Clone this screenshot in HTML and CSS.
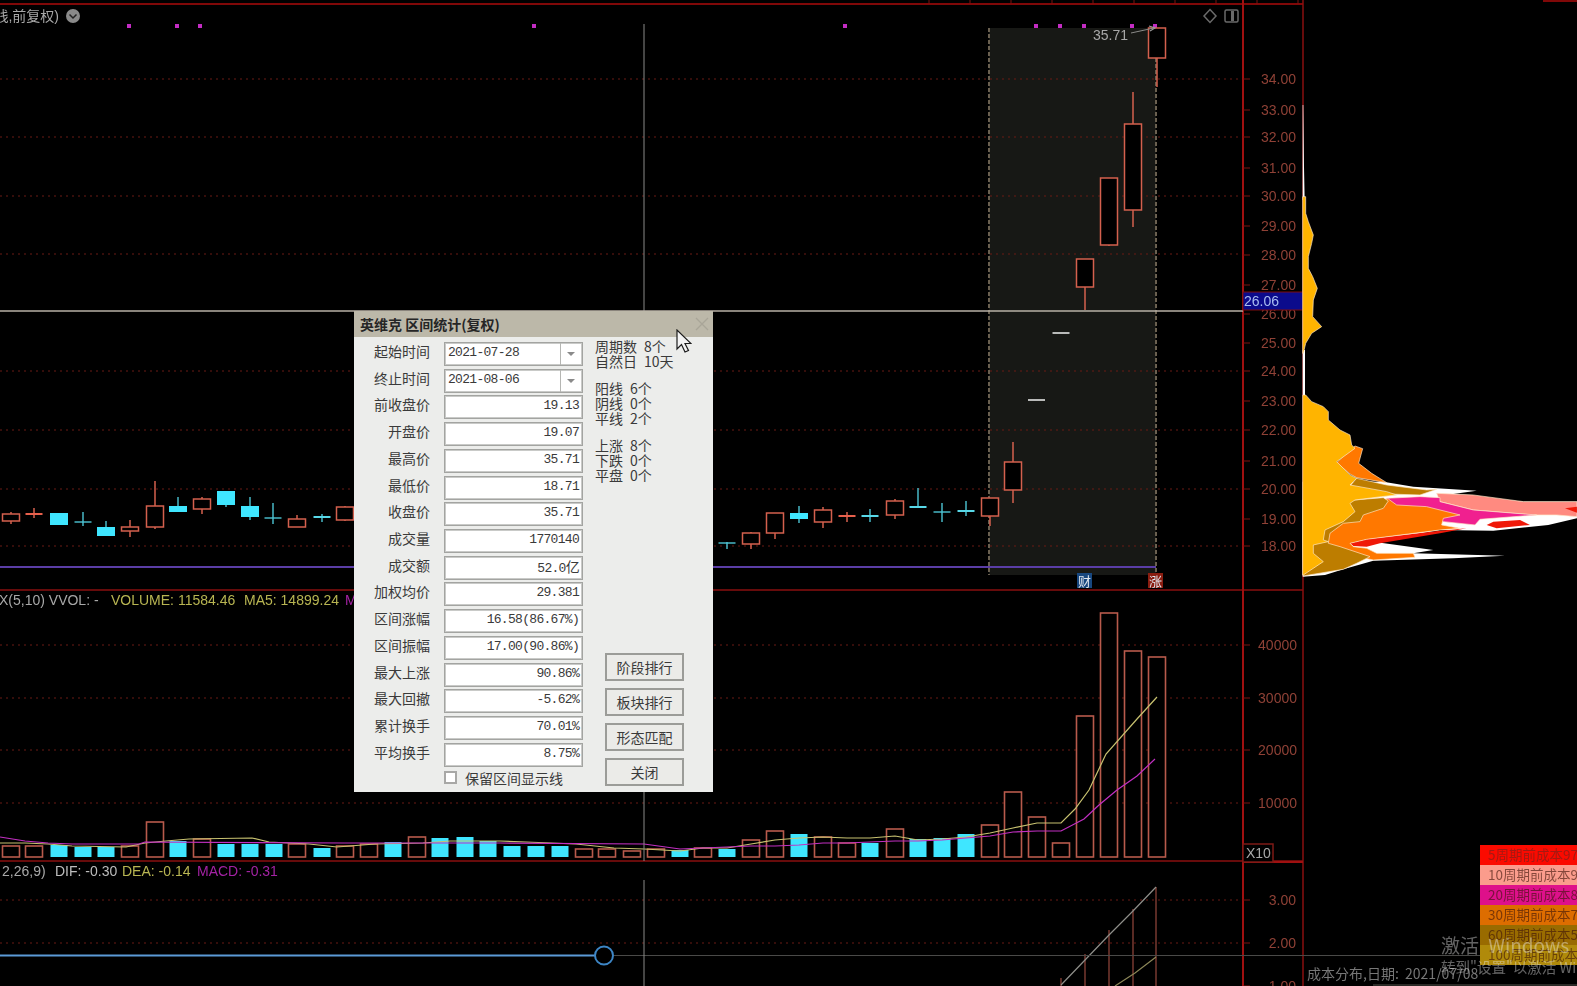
FILE: index.html
```html
<!DOCTYPE html>
<html lang="zh-CN">
<head>
    <meta charset="UTF-8">
    <title>区间统计</title>
    <link rel="stylesheet" href="styles.css">
</head>
<body>
    <div class="stage">
        <svg id="chart" class="chart" width="1577" height="986" viewBox="0 0 1577 986"></svg>

        <div class="legend">
            <div class="legend-row c5">5周期前成本97%</div>
            <div class="legend-row c10">10周期前成本92%</div>
            <div class="legend-row c20">20周期前成本85%</div>
            <div class="legend-row c30">30周期前成本76%</div>
            <div class="legend-row c60">60周期前成本58%</div>
            <div class="legend-row c100">100周期前成本41%</div>
        </div>
        <div class="date-line">成本分布,日期:&nbsp; 2021/07/08</div>
        <div class="watermark">
            <div class="wm-big">激活 Windows</div>
            <div class="wm-small">转到"设置"以激活 Windows。</div>
        </div>

        <div class="dialog">
            <div class="dialog-title">
                <span>英维克 区间统计(复权)</span>
                <svg class="close-icon" width="14" height="14" viewBox="0 0 14 14">
                    <path d="M1 1L13 13M13 1L1 13"/>
                </svg>
            </div>
            <div class="dialog-body">
                <div class="form-col">
                    <div class="form-grid">
                        <label>起始时间</label>
                        <div class="field combo"><span>2021-07-28</span><i class="combo-btn"></i></div>
                        <label>终止时间</label>
                        <div class="field combo"><span>2021-08-06</span><i class="combo-btn"></i></div>
                        <label>前收盘价</label><div class="field">19.13</div>
                        <label>开盘价</label><div class="field">19.07</div>
                        <label>最高价</label><div class="field">35.71</div>
                        <label>最低价</label><div class="field">18.71</div>
                        <label>收盘价</label><div class="field">35.71</div>
                        <label>成交量</label><div class="field">1770140</div>
                        <label>成交额</label><div class="field">52.0<em>亿</em></div>
                        <label>加权均价</label><div class="field">29.381</div>
                        <label>区间涨幅</label><div class="field">16.58(86.67%)</div>
                        <label>区间振幅</label><div class="field">17.00(90.86%)</div>
                        <label>最大上涨</label><div class="field">90.86%</div>
                        <label>最大回撤</label><div class="field">-5.62%</div>
                        <label>累计换手</label><div class="field">70.01%</div>
                        <label>平均换手</label><div class="field">8.75%</div>
                    </div>
                    <div class="keep-line"><i class="checkbox"></i>保留区间显示线</div>
                </div>
                <div class="side-col">
                    <div class="stats">
                        <div class="stat-group">
                            <div class="stat"><span>周期数</span><span>8个</span></div>
                            <div class="stat"><span>自然日</span><span>10天</span></div>
                        </div>
                        <div class="stat-group">
                            <div class="stat"><span>阳线</span><span>6个</span></div>
                            <div class="stat"><span>阴线</span><span>0个</span></div>
                            <div class="stat"><span>平线</span><span>2个</span></div>
                        </div>
                        <div class="stat-group">
                            <div class="stat"><span>上涨</span><span>8个</span></div>
                            <div class="stat"><span>下跌</span><span>0个</span></div>
                            <div class="stat"><span>平盘</span><span>0个</span></div>
                        </div>
                    </div>
                    <div class="buttons">
                        <button>阶段排行</button>
                        <button>板块排行</button>
                        <button>形态匹配</button>
                        <button>关闭</button>
                    </div>
                </div>
            </div>
        </div>

        <svg class="cursor" width="16" height="25" viewBox="0 0 16 25">
            <path d="M1 1V20L5.5 15.5L9 23L12.5 21.5L9 14.5H15Z"/>
        </svg>
    </div>
    <script src="chart.js"></script>
</body>
</html>
```

FILE: styles.css
```css
body {
    margin: 0;
    background-color: #000;
    overflow: hidden;
}
.stage {
    position: relative;
    width: 1577px;
    height: 986px;
    overflow: hidden;
    font-family: "Liberation Sans", Arial, sans-serif;
    filter: blur(0.4px);
}
.chart {
    position: absolute;
    left: 0;
    top: 0;
}
.chart text {
    font-family: "Liberation Sans", "Noto Sans CJK SC", sans-serif;
    font-size: 14px;
}

/* chart lines */
.frame { stroke: #8a0f0f; stroke-width: 1.5; fill: none; }
.frame-top { stroke: #800808; stroke-width: 2; }
.axis { stroke: #a01010; stroke-width: 2; }
.tick { stroke: #7d1210; stroke-width: 1; }
.dotted { stroke: #6a1a14; stroke-width: 1; stroke-dasharray: 2 4; }
.cross { stroke: #8a8a88; stroke-width: 1; }
.cross-h { stroke: #b9b0a6; stroke-width: 1.5; }
.level { stroke: #5a3da6; stroke-width: 2; }
.region { fill: #171815; }
.region-edge { stroke: #6a6050; stroke-width: 2; stroke-dasharray: 4 2; }
.dot { fill: #c42cc4; }

/* candles */
.up { stroke: #d4604e; stroke-width: 1.5; fill: #000; }
.up-line { stroke: #d4604e; stroke-width: 1.5; }
.down { fill: #3fe6ff; stroke: none; }
.down-line { stroke: #4cc5d5; stroke-width: 1.4; }
.flat { stroke: #f0f0f0; stroke-width: 1.5; }
.red-flat { stroke: #e8604c; stroke-width: 2; }
.cyan-flat { stroke: #58d8e8; stroke-width: 2; }
.vol-up { stroke: #b85a4c; stroke-width: 1.6; fill: #000; }

.ma5 { stroke: #c8c270; stroke-width: 1.2; fill: none; }
.ma10 { stroke: #c22fc2; stroke-width: 1.2; fill: none; }
.macd-dif { stroke: #8f8f8a; stroke-width: 1.2; fill: none; }
.macd-dea { stroke: #8c8758; stroke-width: 1.2; fill: none; }
.macd-bar { stroke: #8a4238; stroke-width: 1.3; }
.slider-line { stroke: #5b9ad6; stroke-width: 2; }
.slider-knob { stroke: #3d86c6; stroke-width: 2; fill: #000; }
.slider-rest { stroke: #4a4a48; stroke-width: 1; }
.base-rest { stroke: #55554c; stroke-width: 1; }

/* chart text */
.axis-label { fill: #8f4136; }
.txt-grey { fill: #a8a8a8; }
.txt-light { fill: #bdbdbd; }
.txt-yellow { fill: #b8b552; }
.txt-purple { fill: #a322a3; }
.price-tag { fill: #0b0b8c; stroke: #7d0e0e; stroke-width: 1; }
.price-text { fill: #a9bdf0; }
.x10-box { fill: #000; stroke: #7d1a16; stroke-width: 1.5; }
.chip-cai { fill: #17477f; }
.chip-zhang { fill: #8a1d10; }
.chart .chip-text { fill: #e0e6ee; font-size: 13px; }
.knob-icon { fill: #8a8a8a; }
.knob-arrow { stroke: #222; stroke-width: 1.5; fill: none; }
.note-arrow { stroke: #9a9a9a; stroke-width: 1.2; fill: none; }
.mini-icon { stroke: #6a6a6a; stroke-width: 1.5; fill: none; }
.mini-fill { fill: #6a6a6a; }

/* cost distribution */
.cost { stroke: #ffe9c8; stroke-width: 2; stroke-linejoin: round; }
.cost-white { fill: #fff; stroke: none; }
.cost-yellow { fill: #ffb400; }
.cost-salmon { fill: #ff8a80; }
.cost-pink { fill: #f0208f; }
.cost-orange { fill: #ff7800; }
.cost-brown { fill: #bd7d00; }
.cost-red { fill: #f01808; }

.legend {
    position: absolute;
    left: 1480px;
    top: 845px;
    width: 97px;
    overflow: hidden;
    font-family: "Noto Sans CJK SC", sans-serif;
    font-size: 13.5px;
}
.legend-row {
    height: 20px;
    line-height: 19px;
    padding-left: 8px;
    white-space: nowrap;
    color: rgba(60, 20, 10, 0.62);
}
.c5 { background-color: #fb0a00; color: #a31a12; }
.c10 { background-color: #fb9c8c; }
.c20 { background-color: #de108a; }
.c30 { background-color: #dd6d00; }
.c60 { background-color: #996b00; }
.c100 { background-color: #b08a0a; }

.date-line {
    position: absolute;
    left: 1307px;
    top: 964px;
    color: #777;
    font-family: "Noto Sans CJK SC", sans-serif;
    font-size: 14px;
    line-height: 18px;
    white-space: nowrap;
}
.watermark {
    position: absolute;
    left: 1441px;
    top: 932px;
    width: 136px;
    overflow: hidden;
    white-space: nowrap;
    font-family: "Noto Sans CJK SC", sans-serif;
    color: rgba(235, 235, 235, 0.42);
}
.wm-big { font-size: 19px; line-height: 25px; word-spacing: 5px; }
.wm-small { font-size: 14.5px; line-height: 20px; }

/* dialog */
.dialog {
    position: absolute;
    left: 354px;
    top: 311px;
    width: 359px;
    height: 481px;
    background-color: #ecedeb;
    font-family: "Noto Sans CJK SC", sans-serif;
    font-size: 14px;
    color: #3a3a3a;
}
.dialog-title {
    display: flex;
    justify-content: space-between;
    align-items: center;
    height: 26px;
    padding: 0 4px 0 6px;
    background-color: #bcb8a9;
    font-weight: bold;
    color: #262626;
}
.close-icon path {
    stroke: #a9a598;
    stroke-width: 1.3;
    fill: none;
}
.dialog-body {
    display: flex;
    padding: 5px 0 6px;
    height: 444px;
}
.form-col {
    width: 229px;
    padding-left: 16px;
    box-sizing: border-box;
}
.form-grid {
    display: grid;
    grid-template-columns: 60px 139px;
    grid-auto-rows: 24px;
    column-gap: 14px;
    row-gap: 2.73px;
}
.form-grid label {
    line-height: 19px;
    text-align: right;
    white-space: nowrap;
}
.field {
    box-sizing: border-box;
    height: 24px;
    padding: 0 3px;
    border: 1px solid #a3a4a1;
    box-shadow: inset 0 0 0 1px #c9cac8;
    background-color: #fff;
    font-family: "Liberation Mono", monospace;
    font-size: 13px;
    letter-spacing: -0.7px;
    line-height: 19px;
    text-align: right;
    white-space: nowrap;
}
.field em {
    font-family: "Noto Sans CJK SC", sans-serif;
    font-size: 14px;
    font-style: normal;
}
.combo {
    display: flex;
    justify-content: space-between;
    padding-right: 0;
    text-align: left;
}
.combo-btn {
    position: relative;
    width: 21px;
    border-left: 1px solid #b5b6b3;
}
.combo-btn::after {
    content: "";
    position: absolute;
    left: 6px;
    top: 9px;
    border-left: 4px solid transparent;
    border-right: 4px solid transparent;
    border-top: 4px solid #8a8a8a;
}
.keep-line {
    display: flex;
    align-items: center;
    height: 20px;
    margin: 1px 0 0 74px;
    white-space: nowrap;
}
.checkbox {
    box-sizing: border-box;
    width: 13px;
    height: 13px;
    margin-right: 8px;
    border: 2px solid #a8a8a6;
    background-color: #fff;
}
.side-col {
    display: flex;
    flex-direction: column;
    justify-content: space-between;
    margin-left: 12px;
}
.stats {
    margin-top: -3px;
}
.stat-group {
    margin-bottom: 12px;
}
.stat {
    display: flex;
    gap: 7px;
    height: 15px;
    line-height: 15px;
    white-space: nowrap;
}
.buttons {
    display: flex;
    flex-direction: column;
    gap: 7px;
    margin-left: 10px;
}
.buttons button {
    width: 79px;
    height: 28px;
    padding: 0;
    border: 2px solid #9b9c98;
    background-color: #ebebe8;
    font-family: inherit;
    font-size: 14px;
    color: #3a3a3a;
}
.cursor {
    position: absolute;
    left: 676px;
    top: 329px;
}
.cursor path {
    fill: #f4f4f4;
    stroke: #1c1c1c;
    stroke-width: 1.2;
}
```

FILE: chart.js
```js
const NS = 'http://www.w3.org/2000/svg';
const chart = document.getElementById('chart');

function add(tag, attrs, parent) {
    const el = document.createElementNS(NS, tag);
    for (const key in attrs) {
        el.setAttribute(key, attrs[key]);
    }
    (parent || chart).appendChild(el);
    return el;
}
function line(x1, y1, x2, y2, cls, parent) {
    return add('line', { x1, y1, x2, y2, class: cls }, parent);
}
function text(x, y, str, cls, anchor) {
    const el = add('text', { x, y, class: cls, 'text-anchor': anchor || 'start' });
    el.textContent = str;
    return el;
}
function poly(points, cls, parent) {
    return add('polyline', { points: points.join(' '), class: cls }, parent);
}

// shaded interval
add('rect', { x: 989, y: 28, width: 167, height: 547, class: 'region' });

// dotted price and volume levels
[79, 137, 196, 254, 371, 430, 489, 546, 645, 698, 750, 803, 900, 943].forEach(y => {
    line(0, y, 1243, y, 'dotted');
});

line(989, 28, 989, 575, 'region-edge');
line(1156, 28, 1156, 575, 'region-edge');

// frame
line(0, 4, 1303, 4, 'frame-top');
line(1543, 1, 1577, 1, 'frame-top');
for (let x = 929; x < 1300; x += 41) {
    line(x, 0, x, 4, 'tick');
}
line(0, 590, 1303, 590, 'frame');
line(0, 861, 1303, 861, 'frame');
line(1243, 0, 1243, 986, 'axis');
line(1303, 0, 1303, 986, 'frame');
line(1243, 862, 1303, 862, 'axis');

line(0, 567, 1156, 567, 'level');

// marks along the top
[129, 177, 200, 534, 845, 1036, 1060, 1084, 1132, 1155].forEach(x => {
    add('rect', { x: x - 2, y: 24, width: 4, height: 4, class: 'dot' });
});

// x, kind, body top, body bottom, wick top, wick bottom
const candles = [
    [11, 'u', 514, 521, 512, 524], [34, 'r', 514, 514, 508, 518], [59, 'd', 513, 525, 513, 525],
    [83, 'c', 522, 522, 512, 526], [106, 'd', 527, 536, 521, 536], [130, 'u', 527, 531, 520, 537],
    [155, 'u', 506, 527, 481, 529], [178, 'd', 506, 512, 497, 512], [202, 'u', 499, 509, 497, 514],
    [226, 'd', 491, 505, 491, 507], [250, 'd', 506, 517, 497, 520], [273, 'c', 518, 518, 503, 524],
    [297, 'u', 519, 527, 515, 527], [322, 'k', 517, 517, 514, 522], [345, 'u', 507, 520, 506, 521],
    [727, 'c', 543, 543, 542, 549], [751, 'u', 533, 544, 532, 549], [775, 'u', 513, 533, 513, 539],
    [799, 'd', 513, 519, 506, 523], [823, 'u', 510, 522, 507, 528], [847, 'r', 516, 516, 512, 522],
    [870, 'k', 516, 516, 509, 522], [895, 'u', 501, 515, 499, 519], [918, 'k', 507, 507, 488, 508],
    [942, 'c', 512, 512, 503, 522], [966, 'k', 511, 511, 501, 516], [990, 'u', 498, 516, 498, 526],
    [1013, 'u', 462, 490, 442, 503], [1036.5, 'f', 400, 400, 400, 400], [1061, 'f', 333, 333, 333, 333],
    [1085, 'u', 259, 287, 259, 310], [1109, 'u', 178, 245, 178, 246], [1133, 'u', 124, 210, 92, 227],
    [1157, 'u', 28, 58, 28, 87]
];
candles.forEach(([x, kind, top, bottom, high, low]) => {
    if (kind === 'f') {
        line(x - 8.5, top, x + 8.5, top, 'flat');
    } else if (kind === 'u') {
        line(x, high, x, low, 'up-line');
        add('rect', { x: x - 8.5, y: top, width: 17, height: bottom - top, class: 'up' });
    } else if (kind === 'd') {
        line(x, high, x, low, 'down-line');
        add('rect', { x: x - 9, y: top, width: 18, height: bottom - top, class: 'down' });
    } else if (kind === 'r') {
        line(x, high, x, low, 'up-line');
        line(x - 8.5, top, x + 8.5, top, 'red-flat');
    } else {
        line(x, high, x, low, 'down-line');
        line(x - 8.5, top, x + 8.5, top, kind === 'k' ? 'cyan-flat' : 'down-line');
    }
});

// volume bars: x, kind, top
const volumes = [
    [11, 'u', 846], [34, 'u', 846], [59, 'd', 845], [83, 'd', 847], [106, 'd', 847], [130, 'u', 846],
    [155, 'u', 822], [178, 'd', 841], [202, 'u', 839], [226, 'd', 844], [250, 'd', 844], [274, 'd', 844],
    [297, 'u', 844], [322, 'd', 848], [345, 'u', 846], [369, 'u', 844], [393, 'd', 842], [417, 'u', 837],
    [440, 'd', 838], [465, 'd', 837], [488, 'd', 841], [512, 'd', 846], [536, 'd', 846], [560, 'd', 846],
    [584, 'u', 849], [607, 'u', 849], [632, 'u', 851], [656, 'u', 849], [680, 'd', 850], [703, 'u', 848],
    [727, 'd', 849], [751, 'u', 840], [775, 'u', 831], [799, 'd', 834], [823, 'u', 837],
    [847, 'u', 843], [870, 'd', 843], [895, 'u', 829], [918, 'd', 839], [942, 'd', 838], [966, 'd', 834],
    [990, 'u', 825], [1013, 'u', 792], [1037, 'u', 817], [1061, 'u', 843], [1085, 'u', 716],
    [1109, 'u', 613], [1133, 'u', 651], [1157, 'u', 657]
];
volumes.forEach(([x, kind, top]) => {
    add('rect', {
        x: x - 8.5,
        y: top,
        width: 17,
        height: 857 - top,
        class: kind === 'u' ? 'vol-up' : 'down'
    });
});

poly(['0,843', '25,843', '48,844', '72,846', '126,847', '145,843', '166,841', '189,839', '252,838', '269,842',
    '309,844', '337,847', '375,844', '423,843', '450,841', '500,841', '526,842', '576,844', '614,848', '644,849',
    '680,851', '703,848', '727,848', '751,844', '775,840', '799,838',
    '823,837', '847,838', '870,838', '895,836', '918,840', '942,839', '966,837', '990,833', '1013,828', '1037,823',
    '1061,823', '1075,809', '1089,790', '1106,754', '1137,719', '1157,697'], 'ma5');
poly(['0,837', '25,841', '48,843', '72,844', '139,844', '145,842', '345,843', '500,843', '644,844', '680,849',
    '703,848', '751,846', '775,846',
    '799,845', '823,843', '847,843', '870,842', '895,841', '918,841', '942,840', '966,838', '990,836', '1013,832',
    '1037,831', '1061,831', '1084,819', '1099,805', '1117,790', '1137,776', '1155,759'], 'ma10');

// macd panel
[1061, 1085, 1109, 1133, 1156].forEach((x, i) => {
    line(x, [978, 954, 930, 909, 887][i], x, 986, 'macd-bar');
});
poly(['1061,985', '1085,960', '1109,935', '1133,911', '1156,887'], 'macd-dif');
poly(['1115,986', '1135,973', '1156,957'], 'macd-dea');
line(614, 955.5, 1577, 955.5, 'slider-rest');
line(0, 955.5, 595, 955.5, 'slider-line');
add('circle', { cx: 604, cy: 955.5, r: 9, class: 'slider-knob' });
line(1373, 985, 1577, 985, 'base-rest');

// crosshair
line(644, 24, 644, 861, 'cross');
line(644, 880, 644, 986, 'cross');
line(0, 311, 1243, 311, 'cross-h');

// axis labels
const priceLabels = [['34.00', 79], ['33.00', 110], ['32.00', 137], ['31.00', 168], ['30.00', 196], ['29.00', 226],
    ['28.00', 255], ['27.00', 285], ['26.00', 314], ['25.00', 343], ['24.00', 371], ['23.00', 401], ['22.00', 430],
    ['21.00', 461], ['20.00', 489], ['19.00', 519], ['18.00', 546]];
priceLabels.forEach(([label, y]) => {
    line(1243, y, 1250, y, 'tick');
    text(1296, y + 5, label, 'axis-label', 'end');
});
[['40000', 645], ['30000', 698], ['20000', 750], ['10000', 803]].forEach(([label, y]) => {
    line(1243, y, 1250, y, 'tick');
    text(1297, y + 5, label, 'axis-label', 'end');
});
[['3.00', 900], ['2.00', 943], ['1.00', 986]].forEach(([label, y]) => {
    line(1243, y, 1250, y, 'tick');
    text(1296, y + 5, label, 'axis-label', 'end');
});

add('rect', { x: 1243, y: 292, width: 60, height: 18, class: 'price-tag' });
text(1244, 306, '26.06', 'price-text');

add('rect', { x: 1243, y: 844, width: 30, height: 18, class: 'x10-box' });
text(1246, 858, 'X10', 'txt-grey');

// titles
text(59, 21, '线,前复权)', 'txt-grey', 'end');
add('circle', { cx: 73, cy: 16, r: 7, class: 'knob-icon' });
add('path', { d: 'M69.5 14.5L73 18L76.5 14.5', class: 'knob-arrow' });

text(-1, 605, 'X(5,10) VVOL: -', 'txt-grey');
text(111, 605, 'VOLUME: 11584.46', 'txt-yellow');
text(244, 605, 'MA5: 14899.24', 'txt-yellow');
text(345, 605, 'MA10', 'txt-purple');

text(2, 876, '2,26,9)', 'txt-grey');
text(55, 876, 'DIF: -0.30', 'txt-light');
text(122, 876, 'DEA: -0.14', 'txt-yellow');
text(197, 876, 'MACD: -0.31', 'txt-purple');

// high price note
text(1093, 40, '35.71', 'txt-grey');
line(1131, 33, 1154, 28, 'cross');
add('path', { d: 'M1149 26L1155 28L1150 31', class: 'note-arrow' });

// marks under the interval
add('rect', { x: 1077, y: 573, width: 15, height: 15, class: 'chip-cai' });
text(1078, 586, '财', 'chip-text');
add('rect', { x: 1148, y: 573, width: 15, height: 15, class: 'chip-zhang' });
text(1149, 586, '涨', 'chip-text');

// small window buttons
add('path', { d: 'M1210 9.5L1216 16L1210 22.5L1204 16Z', class: 'mini-icon' });
add('rect', { x: 1225, y: 10, width: 13, height: 12, rx: 1.5, class: 'mini-icon' });
add('rect', { x: 1231, y: 11, width: 3, height: 10, class: 'mini-fill' });

// cost distribution, drawn in a 3x grid from x=1240, y=200
const cost = add('g', { transform: 'translate(1240 200) scale(0.3333)' });
function costShape(cls, pts) {
    add('polygon', { points: pts, class: cls }, cost);
}
costShape('cost-white', '188,-285 190,-285 192,-100 194,0 188,0');
costShape('cost-white', '188,450 195,450 195,585 188,585');
costShape('cost-white', '188,845 430,845 520,860 710,872 640,882 850,905 1011,905 1011,955 925,975 760,992 600,990 400,1025 580,1050 520,1060 795,1067 640,1075 400,1082 310,1108 255,1125 188,1130');
costShape('cost cost-salmon', '590,880 700,885 850,905 1011,905 1011,950 950,945 880,945 700,930 600,905');
costShape('cost cost-pink', '440,895 540,890 600,893 600,905 700,930 890,945 720,958 705,975 610,965 400,950');
costShape('cost-red', '740,975 760,965 840,960 870,975 770,985');
costShape('cost-red', '975,925 1011,920 1011,938');
costShape('cost cost-orange', '345,738 368,746 356,790 395,820 440,848 350,833 330,822 290,788');
costShape('cost-red', '330,1030 380,1018 600,992 680,985 600,1000 420,1030 380,1040 340,1038');
costShape('cost cost-orange', '445,897 470,915 560,920 660,945 610,955 605,975 660,985 600,990 380,1018 330,1030 340,1040 380,1045 410,1060 520,1060 525,1072 400,1080 250,1050 250,1000 300,900');
costShape('cost cost-brown', '350,835 440,855 560,870 590,868 540,885 440,882 330,858');
costShape('cost cost-brown', '345,900 430,893 445,903 430,925 370,945 360,965 310,970 270,1000 265,1030 300,1040 390,1070 350,1090 310,1108 190,1128 188,1030 188,900');
costShape('cost cost-yellow', '188,-10 197,-10 197,40 205,65 220,105 215,130 205,170 205,205 218,230 232,265 220,300 218,350 245,380 215,400 197,430 190,460 188,460');
costShape('cost cost-yellow', '188,585 197,585 215,605 250,620 265,635 265,660 300,690 330,705 335,735 345,745 290,785 330,825 350,835 330,855 440,875 470,885 425,890 345,900 330,910 345,935 310,965 255,990 250,1020 265,1025 220,1035 220,1060 250,1085 190,1125 188,1125');
```
